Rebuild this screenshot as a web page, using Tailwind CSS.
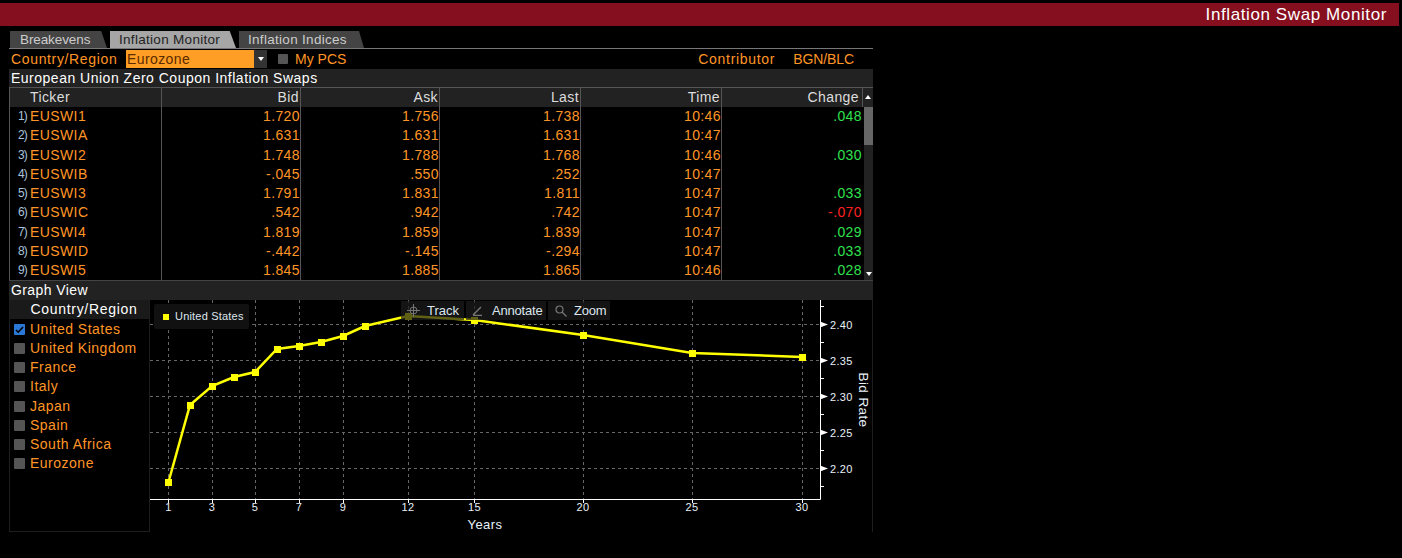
<!DOCTYPE html>
<html lang="en">
<head>
    <meta charset="UTF-8">
    <title>Inflation Swap Monitor</title>
    <script src="https://cdn.jsdelivr.net/npm/@tailwindcss/browser@4"></script>
</head>
<body class="bg-black h-[558px] w-[1402px] overflow-hidden font-['Liberation_Sans',sans-serif] text-[14px] leading-[19px] tracking-[0.4px]">

<!-- Title bar -->
<div class="pt-[3px] pr-[3px]">
    <div class="h-[23px] bg-[#860f1f] flex items-center justify-end pr-[12px] text-white text-[17px] tracking-[0.6px]">Inflation Swap Monitor</div>
</div>

<div class="w-[864px] ml-[9px] mt-[5px]">
    <!-- Tabs -->
    <div class="flex h-[17px] gap-[3px] pl-[1px] text-[13.5px] leading-[17px] tracking-[0.3px]">
        <div class="w-[97px] bg-[#444] text-[#ccc] pl-[10px] tracking-[-0.1px] [clip-path:polygon(0_0,94%_0,100%_100%,0_100%)]">Breakevens</div>
        <div class="w-[126px] bg-[#a6a6a6] text-[#222] pl-[9px] [clip-path:polygon(0_0,95%_0,100%_100%,0_100%)]">Inflation Monitor</div>
        <div class="w-[125px] bg-[#444] text-[#ccc] pl-[9px] [clip-path:polygon(0_0,96%_0,100%_100%,0_100%)]">Inflation Indices</div>
    </div>
    <div class="h-px bg-[#777]"></div>

    <!-- Filters -->
    <div class="h-[20px] flex items-center pl-[2px] text-[#ff9526]">
        <span class="w-[115px] tracking-[0.65px]">Country/Region</span>
        <div class="w-[128px] h-[18px] bg-[#ff9e24] text-[#5a2a00] pl-[1px]">Eurozone</div>
        <div class="w-[13px] h-[18px] bg-[#333] flex items-center justify-center"><span class="border-x-[3px] border-t-[4px] border-x-transparent border-t-white"></span></div>
        <span class="w-[10px] h-[10px] ml-[11px] bg-[#555] rounded-[1px]"></span>
        <span class="ml-[7px] tracking-normal">My PCS</span>
        <span class="ml-auto tracking-[0.7px]">Contributor</span>
        <span class="ml-[18px] mr-[19px] tracking-[-0.1px]">BGN/BLC</span>
    </div>

    <div class="h-[18px] bg-[#222] text-white pl-[2px] tracking-[0.5px]">European Union Zero Coupon Inflation Swaps</div>

    <!-- Table -->
    <div class="border-l border-[#555] border-t">
        <div class="grid grid-cols-[152px_139px_139px_141px_141px_141px_9px] h-[19px] bg-[#222] text-[#ddd] text-right">
            <div class="text-left pl-[20px] border-r border-[#555]">Ticker</div>
            <div class="border-r border-[#555] pr-[1px]">Bid</div>
            <div class="border-r border-[#555] pr-[1px]">Ask</div>
            <div class="border-r border-[#555] pr-[1px]">Last</div>
            <div class="border-r border-[#555] pr-[1px]">Time</div>
            <div class="border-r border-[#555] pr-[3px]">Change</div>
            <div class="flex justify-center pt-[7px]"><span class="h-0 border-x-[3px] border-b-[4px] border-x-transparent border-b-white"></span></div>
        </div>
        <div class="flex">
            <div class="w-[854px] text-[#ff9526] text-right leading-[19.25px]">
                <div class="grid grid-cols-[152px_139px_139px_141px_141px_141px]">
                    <div class="border-r border-[#555] text-left pl-[8px] flex"><span class="w-[12px] text-[#a9c4dc] text-[12px] tracking-[-1px]">1)</span>EUSWI1</div>
                    <div class="border-r border-[#555]">1.720</div><div class="border-r border-[#555]">1.756</div><div class="border-r border-[#555]">1.738</div><div class="border-r border-[#555]">10:46</div><div class="text-[#2fe04e] pr-[1px]">.048</div>
                </div>
                <div class="grid grid-cols-[152px_139px_139px_141px_141px_141px]">
                    <div class="border-r border-[#555] text-left pl-[8px] flex"><span class="w-[12px] text-[#a9c4dc] text-[12px] tracking-[-1px]">2)</span>EUSWIA</div>
                    <div class="border-r border-[#555]">1.631</div><div class="border-r border-[#555]">1.631</div><div class="border-r border-[#555]">1.631</div><div class="border-r border-[#555]">10:47</div><div></div>
                </div>
                <div class="grid grid-cols-[152px_139px_139px_141px_141px_141px]">
                    <div class="border-r border-[#555] text-left pl-[8px] flex"><span class="w-[12px] text-[#a9c4dc] text-[12px] tracking-[-1px]">3)</span>EUSWI2</div>
                    <div class="border-r border-[#555]">1.748</div><div class="border-r border-[#555]">1.788</div><div class="border-r border-[#555]">1.768</div><div class="border-r border-[#555]">10:46</div><div class="text-[#2fe04e] pr-[1px]">.030</div>
                </div>
                <div class="grid grid-cols-[152px_139px_139px_141px_141px_141px]">
                    <div class="border-r border-[#555] text-left pl-[8px] flex"><span class="w-[12px] text-[#a9c4dc] text-[12px] tracking-[-1px]">4)</span>EUSWIB</div>
                    <div class="border-r border-[#555]">-.045</div><div class="border-r border-[#555]">.550</div><div class="border-r border-[#555]">.252</div><div class="border-r border-[#555]">10:47</div><div></div>
                </div>
                <div class="grid grid-cols-[152px_139px_139px_141px_141px_141px]">
                    <div class="border-r border-[#555] text-left pl-[8px] flex"><span class="w-[12px] text-[#a9c4dc] text-[12px] tracking-[-1px]">5)</span>EUSWI3</div>
                    <div class="border-r border-[#555]">1.791</div><div class="border-r border-[#555]">1.831</div><div class="border-r border-[#555]">1.811</div><div class="border-r border-[#555]">10:47</div><div class="text-[#2fe04e] pr-[1px]">.033</div>
                </div>
                <div class="grid grid-cols-[152px_139px_139px_141px_141px_141px]">
                    <div class="border-r border-[#555] text-left pl-[8px] flex"><span class="w-[12px] text-[#a9c4dc] text-[12px] tracking-[-1px]">6)</span>EUSWIC</div>
                    <div class="border-r border-[#555]">.542</div><div class="border-r border-[#555]">.942</div><div class="border-r border-[#555]">.742</div><div class="border-r border-[#555]">10:47</div><div class="text-[#ff2020] pr-[1px]">-.070</div>
                </div>
                <div class="grid grid-cols-[152px_139px_139px_141px_141px_141px]">
                    <div class="border-r border-[#555] text-left pl-[8px] flex"><span class="w-[12px] text-[#a9c4dc] text-[12px] tracking-[-1px]">7)</span>EUSWI4</div>
                    <div class="border-r border-[#555]">1.819</div><div class="border-r border-[#555]">1.859</div><div class="border-r border-[#555]">1.839</div><div class="border-r border-[#555]">10:47</div><div class="text-[#2fe04e] pr-[1px]">.029</div>
                </div>
                <div class="grid grid-cols-[152px_139px_139px_141px_141px_141px]">
                    <div class="border-r border-[#555] text-left pl-[8px] flex"><span class="w-[12px] text-[#a9c4dc] text-[12px] tracking-[-1px]">8)</span>EUSWID</div>
                    <div class="border-r border-[#555]">-.442</div><div class="border-r border-[#555]">-.145</div><div class="border-r border-[#555]">-.294</div><div class="border-r border-[#555]">10:47</div><div class="text-[#2fe04e] pr-[1px]">.033</div>
                </div>
                <div class="grid grid-cols-[152px_139px_139px_141px_141px_141px]">
                    <div class="border-r border-[#555] text-left pl-[8px] flex"><span class="w-[12px] text-[#a9c4dc] text-[12px] tracking-[-1px]">9)</span>EUSWI5</div>
                    <div class="border-r border-[#555]">1.845</div><div class="border-r border-[#555]">1.885</div><div class="border-r border-[#555]">1.865</div><div class="border-r border-[#555]">10:46</div><div class="text-[#2fe04e] pr-[1px]">.028</div>
                </div>
            </div>
            <!-- Scrollbar -->
            <div class="w-[9px] bg-[#222] flex flex-col">
                <div class="h-[38px] bg-[#666]"></div>
                <div class="flex-1"></div>
                <div class="h-[12px] flex justify-center pt-[4px]"><span class="h-0 border-x-[3px] border-t-[4px] border-x-transparent border-t-white"></span></div>
            </div>
        </div>
    </div>

    <!-- Graph view -->
    <div class="h-[19px] bg-[#222] border-t border-[#444] box-content text-white pl-[2px] leading-[19px]">Graph View</div>
    <div class="flex h-[232px]">
        <div class="w-[141px] border border-t-0 border-[#1e1e1e] text-[#ff9526]">
            <div class="h-[19px] bg-[#1a1a1a] text-white text-center pl-[9px] tracking-[0.7px]">Country/Region</div>
            <div class="flex flex-col pt-[0.5px] leading-[19.2px] tracking-[0.5px]">
                <div class="flex items-center pl-[4px] gap-[5px]"><span class="w-[11px] h-[11px] rounded-[1px] bg-[#2a78d8] flex items-center justify-center"><svg width="9" height="9" viewBox="0 0 9 9"><path d="M1 5l2.2 2.2L8 2" fill="none" stroke="#000" stroke-width="1.6"/></svg></span>United States</div>
                <div class="flex items-center pl-[4px] gap-[5px]"><span class="w-[11px] h-[11px] rounded-[1px] bg-[#555]"></span>United Kingdom</div>
                <div class="flex items-center pl-[4px] gap-[5px]"><span class="w-[11px] h-[11px] rounded-[1px] bg-[#555]"></span>France</div>
                <div class="flex items-center pl-[4px] gap-[5px]"><span class="w-[11px] h-[11px] rounded-[1px] bg-[#555]"></span>Italy</div>
                <div class="flex items-center pl-[4px] gap-[5px]"><span class="w-[11px] h-[11px] rounded-[1px] bg-[#555]"></span>Japan</div>
                <div class="flex items-center pl-[4px] gap-[5px]"><span class="w-[11px] h-[11px] rounded-[1px] bg-[#555]"></span>Spain</div>
                <div class="flex items-center pl-[4px] gap-[5px]"><span class="w-[11px] h-[11px] rounded-[1px] bg-[#555]"></span>South Africa</div>
                <div class="flex items-center pl-[4px] gap-[5px]"><span class="w-[11px] h-[11px] rounded-[1px] bg-[#555]"></span>Eurozone</div>
            </div>
        </div>

        <!-- Chart: svg coordinates are page x-150, y-300 -->
        <div class="relative w-[723px] border-r border-[#1e1e1e]">
            <svg width="722" height="232" viewBox="0 0 722 232" class="block">
                <g stroke="#666" stroke-dasharray="3 3" fill="none">
                    <path d="M0 24.5H670M0 60.5H670M0 96.5H670M0 132.5H670M0 168.5H670"/>
                    <path d="M18.5 0V199M62.5 0V199M105.5 0V199M149.5 0V199M193.5 0V199M258.5 0V199M324.5 0V199M433.5 0V199M542.5 0V199M652.5 0V199"/>
                </g>
                <path d="M0 199.5H670.5V0M670 6.5h4M670 42.5h4M670 78.5h4M670 114.5h4M670 150.5h4M670 186.5h4" stroke="#fff" fill="none"/>
                <path d="M18.5 199v4M62.5 199v4M105.5 199v4M149.5 199v4M193.5 199v4M258.5 199v4M324.5 199v4M433.5 199v4M542.5 199v4M652.5 199v4" stroke="#fff"/>
                <path d="M670 21.5l8 3-8 3zM670 57.5l8 3-8 3zM670 93.5l8 3-8 3zM670 129.5l8 3-8 3zM670 165.5l8 3-8 3z" fill="#fff"/>
                <polyline points="18.5,182 40,105 62,86 84,77 105,72 127,49 149,46 171,42 193,36 215,26 258,16 324.5,20 433,35 542,53 652,57" fill="none" stroke="#ffff00" stroke-width="2.5"/>
                <g fill="#ffff00">
                    <rect x="15" y="179" width="7" height="7"/><rect x="37" y="102" width="7" height="7"/><rect x="59" y="83" width="7" height="7"/><rect x="81" y="74" width="7" height="7"/><rect x="102" y="69" width="7" height="7"/><rect x="124" y="46" width="7" height="7"/><rect x="146" y="43" width="7" height="7"/><rect x="168" y="39" width="7" height="7"/><rect x="190" y="33" width="7" height="7"/><rect x="212" y="23" width="7" height="7"/><rect x="255" y="13" width="7" height="7"/><rect x="321" y="17" width="7" height="7"/><rect x="430" y="32" width="7" height="7"/><rect x="539" y="50" width="7" height="7"/><rect x="649" y="54" width="7" height="7"/>
                </g>
                <g fill="#e8f0f8" font-size="11" text-anchor="middle" letter-spacing="0.3">
                    <text x="18.5" y="211">1</text><text x="62" y="211">3</text><text x="105" y="211">5</text><text x="149" y="211">7</text><text x="193" y="211">9</text><text x="258" y="211">12</text><text x="324.5" y="211">15</text><text x="433" y="211">20</text><text x="542" y="211">25</text><text x="652" y="211">30</text>
                </g>
                <g fill="#e8f0f8" font-size="11" letter-spacing="0.3">
                    <text x="680" y="28.5">2.40</text><text x="680" y="64.5">2.35</text><text x="680" y="100.5">2.30</text><text x="680" y="136.5">2.25</text><text x="680" y="172.5">2.20</text>
                </g>
                <text x="335" y="229" fill="#e8f0f8" font-size="13" text-anchor="middle">Years</text>
                <text transform="translate(709 100) rotate(90)" fill="#e8f0f8" font-size="13.5" text-anchor="middle">Bid Rate</text>
            </svg>

            <!-- Legend -->
            <div class="absolute left-[4px] top-[4px] w-[95px] h-[25px] bg-[#111] rounded-[2px] flex items-center pl-[9px] gap-[6px] text-[11px] tracking-[0.2px] text-[#dde6ee]">
                <span class="w-[6px] h-[6px] bg-[#ffff00]"></span>United States
            </div>

            <!-- Chart tools -->
            <div class="absolute left-[251px] top-[1px] h-[19px] flex gap-[2px] text-[13px] text-[#dde6ee] tracking-normal">
                <div class="w-[63px] bg-[#1c1c1c]/70 flex items-center pl-[6px] gap-[7px]">
                    <svg width="13" height="13" viewBox="0 0 13 13" fill="none" stroke="#777"><circle cx="6.5" cy="6.5" r="3.5"/><path d="M6.5 0v13M0 6.5h13"/></svg>Track
                </div>
                <div class="w-[80px] bg-[#1c1c1c]/70 flex items-center pl-[6px] gap-[9px] tracking-[-0.2px]">
                    <svg width="11" height="11" viewBox="0 0 11 11" fill="none" stroke="#777" stroke-width="1.4"><path d="M1 10L9 2M1 10.5h9"/></svg>Annotate
                </div>
                <div class="w-[62px] bg-[#1c1c1c]/70 flex items-center pl-[7px] gap-[7px] tracking-[-0.2px]">
                    <svg width="12" height="12" viewBox="0 0 12 12" fill="none" stroke="#777" stroke-width="1.2"><circle cx="4.5" cy="4.5" r="3.5"/><path d="M7 7l4.5 4.5"/></svg>Zoom
                </div>
            </div>
        </div>
    </div>
</div>

</body>
</html>
